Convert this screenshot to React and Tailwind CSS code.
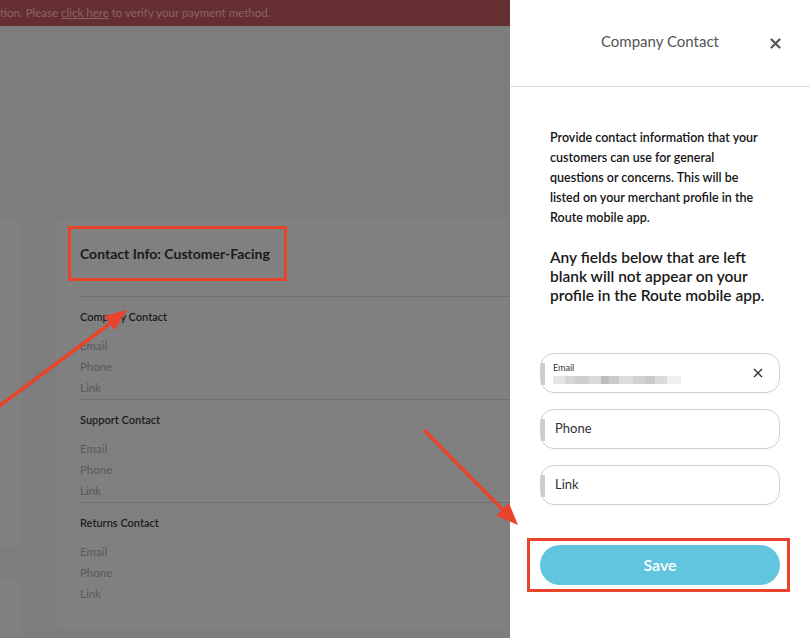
import React from "react";

const font = { fontFamily: "Lato, 'Open Sans', sans-serif" };

function ContactGroup({ title, last }) {
  return (
    <div className={`pt-[12px] pb-[1px] ${last ? "" : "border-b border-[#6f6f6f]"}`}>
      <p className="text-[11px] font-semibold text-[#1c1c1c] leading-[16px]">{title}</p>
      <div className="mt-[10px] flex flex-col text-[11.5px] text-[#595959] leading-[21px]">
        <span>Email</span>
        <span>Phone</span>
        <span>Link</span>
      </div>
    </div>
  );
}

function Field({ label, children }) {
  return (
    <div className="relative h-[40px] w-[240px] rounded-[14px] border border-[#cfcfcf] bg-white flex items-center">
      <span className="absolute left-0 top-[9px] h-[22px] w-[4px] bg-[#cccccc]" />
      {children || <span className="pl-[14px] text-[13px] text-[#333]">{label}</span>}
    </div>
  );
}

export default function App() {
  return (
    <div className="relative w-[810px] h-[638px] overflow-hidden flex" style={font}>
      {/* page behind the overlay */}
      <div className="w-[510px] h-full bg-[#7d7d7d] flex flex-col overflow-hidden">
        <div className="h-[26px] shrink-0 bg-[#652e30] flex items-center text-[11.5px] text-[#8c6364] whitespace-nowrap">
          <span>
            tion. Please <span className="underline">click here</span> to verify your payment method.
          </span>
        </div>
        <div className="flex gap-[33px] pt-[192px]">
          <div className="w-[22px] shrink-0 flex flex-col gap-[30px]">
            <div className="h-[330px] rounded-r-[12px] bg-[#808080]" />
            <div className="h-[80px] rounded-tr-[12px] bg-[#808080]" />
          </div>
          <div className="w-[500px] shrink-0 h-[412px] rounded-[12px] bg-[#808080] pl-[25px]">
            <div className="mt-[8px] -ml-[12px] w-[219px] h-[55px] border-[3px] border-[#e8432b] flex items-center pl-[9px]">
              <h2 className="text-[14px] font-bold text-[#1a1a1a]">Contact Info: Customer-Facing</h2>
            </div>
            <div className="mt-[15px] border-t border-[#6f6f6f]">
              <ContactGroup title="Company Contact" />
              <ContactGroup title="Support Contact" />
              <ContactGroup title="Returns Contact" last />
            </div>
          </div>
        </div>
      </div>

      {/* drawer */}
      <div className="w-[300px] h-full bg-white flex flex-col">
        <div className="relative h-[87px] shrink-0 border-b border-[#dedede] flex items-center justify-center">
          <span className="text-[15px] text-[#555] -mt-[3px]">Company Contact</span>
          <span className="absolute right-[29px] top-[38px] text-[#555]">
            <svg width="11" height="11" viewBox="0 0 11 11">
              <path d="M1.5 1.5 L9.5 9.5 M9.5 1.5 L1.5 9.5" stroke="#555" strokeWidth="2.2" strokeLinecap="round" />
            </svg>
          </span>
        </div>
        <div className="px-[40px] pt-[41px]">
          <p className="text-[12.5px] font-semibold leading-[20px] text-[#141414] whitespace-nowrap">
            Provide contact information that your
            <br />
            customers can use for general
            <br />
            questions or concerns. This will be
            <br />
            listed on your merchant profile in the
            <br />
            Route mobile app.
          </p>
          <p className="mt-[20px] text-[15.5px] font-semibold leading-[19px] text-[#1a1a1a] whitespace-nowrap">
            Any fields below that are left
            <br />
            blank will not appear on your
            <br />
            profile in the Route mobile app.
          </p>
        </div>
        <div className="px-[30px] mt-[48px] flex flex-col gap-[16px]">
          <Field>
            <div className="pl-[12px] flex-1 flex flex-col">
              <span className="text-[9px] text-[#333] leading-[11px]">Email</span>
              <div className="mt-[3px] flex h-[8px] w-[128px] blur-[0.6px]">
                <span className="w-[12px] bg-[#e4e4e4]" />
                <span className="w-[10px] bg-[#d6d6d6]" />
                <span className="w-[14px] bg-[#cfcfcf]" />
                <span className="w-[12px] bg-[#d9d9d9]" />
                <span className="w-[8px] bg-[#bdbdbd]" />
                <span className="w-[10px] bg-[#cacaca]" />
                <span className="w-[14px] bg-[#dcdcdc]" />
                <span className="w-[12px] bg-[#d2d2d2]" />
                <span className="w-[10px] bg-[#c9c9c9]" />
                <span className="w-[12px] bg-[#dadada]" />
                <span className="w-[14px] bg-[#efefef]" />
              </div>
            </div>
            <svg className="mr-[16px]" width="10" height="10" viewBox="0 0 10 10">
              <path d="M1 1 L9 9 M9 1 L1 9" stroke="#333" strokeWidth="1.4" />
            </svg>
          </Field>
          <Field label="Phone" />
          <Field label="Link" />
        </div>
        <div className="mt-[33px] ml-[17px] w-[263px] h-[54px] border-[3px] border-[#e8432b] pl-[10px] pt-[4px]">
          <button className="w-[240px] h-[40px] rounded-full bg-[#62c5de] text-white text-[16px] font-semibold">
            Save
          </button>
        </div>
      </div>

      {/* annotation arrows */}
      <svg className="absolute inset-0 pointer-events-none" width="810" height="638">
        <line x1="-10" y1="413" x2="112" y2="322" stroke="#e8432b" strokeWidth="3.5" />
        <polygon points="127,310 114.7,330.3 103.9,315.9" fill="#e8432b" />
        <line x1="424" y1="430" x2="505" y2="512" stroke="#e8432b" strokeWidth="3.5" />
        <polygon points="518,525 508.9,503.1 496.1,515.7" fill="#e8432b" />
      </svg>
    </div>
  );
}
